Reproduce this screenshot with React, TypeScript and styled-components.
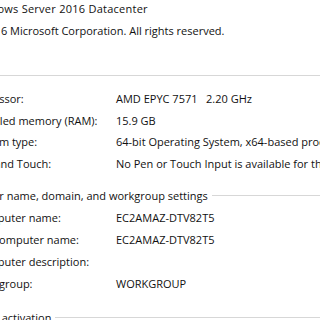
import React from "react";
import styled, { createGlobalStyle } from "styled-components";

const GlobalStyle = createGlobalStyle`
  html, body {
    margin: 0;
    padding: 0;
    background: #ffffff;
    overflow: hidden;
  }
  body {
    width: 320px;
    height: 320px;
    font-family: "Open Sans", "Noto Sans", sans-serif;
    font-size: 11px;
    color: #111111;
  }
`;

const Window = styled.div`
  width: 460px;
  margin-left: -48px;
  margin-top: -2px;
  display: flex;
  flex-direction: column;
`;

const Edition = styled.div`
  padding-left: 18px;
  display: flex;
  flex-direction: column;
  margin-bottom: 22px;
`;

const Line = styled.div<{ $wide?: boolean }>`
  line-height: 22px;
  white-space: nowrap;
  letter-spacing: ${(p) => (p.$wide ? "0.25px" : "0")};
`;

const SectionHeader = styled.div<{ $gapAfter?: number }>`
  display: flex;
  align-items: center;
  gap: 4px;
  height: 22px;
  white-space: nowrap;
  margin-bottom: ${(p) => p.$gapAfter ?? 0}px;
`;

const Rule = styled.div`
  flex: 1;
  height: 1px;
  background: #d7d7d7;
  margin-top: 1px;
`;

const InfoGrid = styled.div<{ $indent: number; $labelWidth: number; $row: number; $gapAfter: number }>`
  display: grid;
  grid-template-columns: ${(p) => p.$labelWidth}px 1fr;
  grid-auto-rows: ${(p) => p.$row}px;
  align-items: center;
  padding-left: ${(p) => p.$indent}px;
  margin-bottom: ${(p) => p.$gapAfter}px;
  white-space: pre;
`;

const Label = styled.span<{ $shift?: number }>`
  margin-left: ${(p) => p.$shift ?? 0}px;
`;
const Value = styled.span``;

const systemRows: [string, string, number][] = [
  ["Processor:", "AMD EPYC 7571   2.20 GHz", -2],
  ["Installed memory (RAM):", "15.9 GB", 0],
  ["System type:", "64-bit Operating System, x64-based processor", 0],
  ["Pen and Touch:", "No Pen or Touch Input is available for this Display", 0],
];

const computerRows: [string, string, number][] = [
  ["Computer name:", "EC2AMAZ-DTV82T5", 0],
  ["Full computer name:", "EC2AMAZ-DTV82T5", -1],
  ["Computer description:", "", 0],
  ["Workgroup:", "WORKGROUP", -2],
];

export default function App() {
  return (
    <>
      <GlobalStyle />
      <Window>
        <Edition>
          <Line $wide>Windows Server 2016 Datacenter</Line>
          <Line>© 2016 Microsoft Corporation. All rights reserved.</Line>
        </Edition>
        <SectionHeader $gapAfter={2}>
          <span>System</span>
          <Rule />
        </SectionHeader>
        <InfoGrid $indent={20} $labelWidth={144} $row={21.5} $gapAfter={10}>
          {systemRows.map(([l, v, s]) => (
            <React.Fragment key={l}>
              <Label $shift={s}>{l}</Label>
              <Value>{v}</Value>
            </React.Fragment>
          ))}
        </InfoGrid>
        <SectionHeader>
          <span>Computer name, domain, and workgroup settings</span>
          <Rule />
        </SectionHeader>
        <InfoGrid $indent={22} $labelWidth={142} $row={22} $gapAfter={12}>
          {computerRows.map(([l, v, s]) => (
            <React.Fragment key={l}>
              <Label $shift={s}>{l}</Label>
              <Value>{v}</Value>
            </React.Fragment>
          ))}
        </InfoGrid>
        <SectionHeader>
          <span>Windows activation</span>
          <Rule />
        </SectionHeader>
      </Window>
    </>
  );
}
